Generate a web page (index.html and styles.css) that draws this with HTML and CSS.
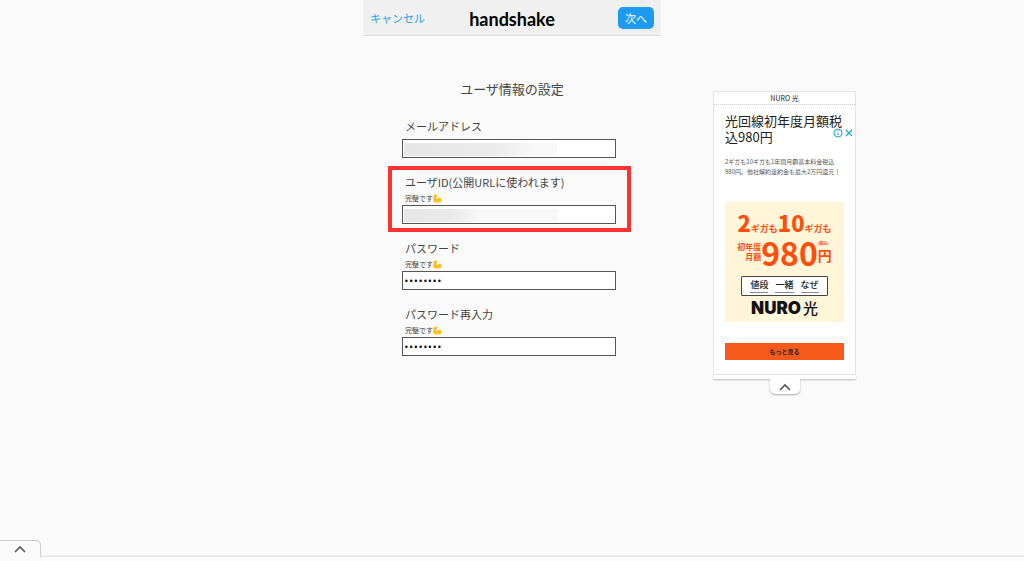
FILE: index.html
```html
<!DOCTYPE html>
<html lang="ja">
<head>
    <meta charset="UTF-8">
    <meta name="viewport" content="width=device-width, initial-scale=1.0">
    <title>handshake</title>
    <link rel="stylesheet" href="styles.css">
</head>
<body>
    <svg class="symbols" aria-hidden="true">
        <symbol id="muscle" viewBox="0 0 32 32">
            <path fill="#ffc41f" d="M5 3c4-2 10-2 11 1 1 3-1 5-4 5l-1 8c2 1 4 2 5 2 2-5 8-7 12-4 4 3 4 10 0 13-6 4-18 3-25 0C0 25 0 20 1 15 2 9 3 5 5 3z"/>
            <path fill="none" stroke="#e08a12" stroke-width="2" d="M8 8l5 1M11 16c-1 3 0 5 2 6M16 19c2-2 4-2 6-1"/>
        </symbol>
        <symbol id="chevron" viewBox="0 0 12 8">
            <path fill="none" stroke="#555" stroke-width="1.6" d="M1 7l5-5 5 5"/>
        </symbol>
    </svg>

    <div class="layout">
        <main class="signup">
            <header class="navbar">
                <a class="cancel" href="#">キャンセル</a>
                <h1 class="logo">handshake</h1>
                <button class="next" type="submit" form="user-form">次へ</button>
            </header>
            <form class="user-form" id="user-form">
                <h2 class="title">ユーザ情報の設定</h2>
                <div class="field field-plain">
                    <label for="email">メールアドレス</label>
                    <input class="masked" type="email" id="email">
                </div>
                <div class="field field-active">
                    <label for="user-id">ユーザID(公開URLに使われます)</label>
                    <p class="hint">完璧です<svg class="emoji"><use href="#muscle"/></svg></p>
                    <input class="masked masked-short" type="text" id="user-id">
                </div>
                <div class="field">
                    <label for="password">パスワード</label>
                    <p class="hint">完璧です<svg class="emoji"><use href="#muscle"/></svg></p>
                    <input type="password" id="password" value="password">
                </div>
                <div class="field">
                    <label for="password2">パスワード再入力</label>
                    <p class="hint">完璧です<svg class="emoji"><use href="#muscle"/></svg></p>
                    <input type="password" id="password2" value="password">
                </div>
            </form>
        </main>

        <aside class="side">
            <div class="ad">
                <p class="ad-brand">NURO 光</p>
                <div class="ad-marks">
                    <svg class="ad-mark" viewBox="0 0 10 10"><circle cx="5" cy="5" r="4" fill="none" stroke="#1aa7c9"/><path stroke="#1aa7c9" d="M5 4.4v3M5 2.3v1"/></svg>
                    <svg class="ad-mark" viewBox="0 0 10 10"><path stroke="#1aa7c9" stroke-width="1.2" d="M2 2l6 6M8 2l-6 6"/></svg>
                </div>
                <div class="ad-body">
                    <h3 class="ad-title">光回線初年度月額税込980円</h3>
                    <p class="ad-text">2ギガも10ギガも1年間月額基本料金税込<br>980円。他社解約違約金も最大2万円還元！</p>
                    <div class="banner">
                        <p class="banner-speed"><b>2</b>ギガも<b>10</b>ギガも</p>
                        <div class="banner-price">
                            <p class="banner-term">初年度<br>月額</p>
                            <p class="banner-amount">980</p>
                            <p class="banner-yen"><small>(税込)</small>円</p>
                        </div>
                        <p class="banner-words"><span>値段</span><span>一緒</span><span>なぜ</span></p>
                        <p class="banner-logo"><b>NURO</b>光</p>
                    </div>
                    <a class="ad-more" href="#">もっと見る</a>
                </div>
            </div>
            <div class="ad-edge"></div>
            <button class="ad-toggle" type="button" aria-label="閉じる"><svg class="chevron"><use href="#chevron"/></svg></button>
        </aside>
    </div>

    <div class="drawer">
        <button class="drawer-tab" type="button" aria-label="開く"><svg class="chevron"><use href="#chevron"/></svg></button>
        <div class="drawer-line"></div>
    </div>
</body>
</html>
```

FILE: styles.css
```css
* {
    margin: 0;
    padding: 0;
    box-sizing: border-box;
}

body {
    min-height: 100vh;
    background: #fafafa;
    color: #444;
    font-family: "Noto Sans CJK JP", sans-serif;
    font-size: 11px;
}

button {
    font-family: inherit;
    cursor: pointer;
}

a {
    text-decoration: none;
}

.symbols {
    display: none;
}

.layout {
    display: grid;
    grid-template-columns: 1fr minmax(0, 298px) 1fr;
}

.signup {
    grid-column: 2;
}

/* header */

.navbar {
    display: grid;
    grid-template-columns: 1fr auto 1fr;
    align-items: center;
    height: 36px;
    padding: 0 7px;
    background: #f0f0f0;
    border-bottom: 1px solid #ddd;
}

.cancel {
    color: #2b9fea;
    font-size: 11px;
}

.logo {
    padding-top: 2px;
    color: #000;
    font-family: Lato, sans-serif;
    font-size: 18px;
    font-weight: bold;
    line-height: 24px;
}

.next {
    justify-self: end;
    width: 36px;
    height: 22px;
    border: none;
    border-radius: 5px;
    background: #1d9bf0;
    color: #fff;
    font-size: 11px;
    line-height: 22px;
}

/* form */

.user-form {
    padding: 41px 30px 0 25px;
}

.title {
    padding: 0 0 9px 5px;
    font-size: 13px;
    font-weight: normal;
    line-height: 24px;
    text-align: center;
}

.field {
    display: flex;
    flex-direction: column;
    padding: 4px 11px 4px 10px;
    border: 4px solid transparent;
}

.field-plain {
    gap: 4px;
}

.field-active {
    border-color: #ff3131;
}

.field label {
    padding-left: 3px;
    font-size: 11px;
    line-height: 17px;
}

.hint {
    display: flex;
    align-items: center;
    padding-left: 3px;
    font-size: 7px;
    line-height: 14px;
}

.emoji {
    width: 9px;
    height: 9px;
}

.field input {
    width: 100%;
    height: 19px;
    padding: 2px 1px 0;
    border: 1px solid #555;
    background: #fff;
    color: #000;
    font-family: "DejaVu Sans", sans-serif;
    font-size: 8px;
}

.field .masked {
    background: linear-gradient(to right, #e6e6e6, #ebebeb 60%, #f8f8f8 85%) 1px 3px / 153px 13px no-repeat #fff;
}

.field .masked-short {
    background-image: linear-gradient(to right, #e6e6e6, #e9e9e9 30%, #f8f8f8 50%);
}

/* ad */

.side {
    display: flex;
    flex-direction: column;
    align-items: center;
    width: 143px;
    margin: 91px 0 0 52px;
}

.ad {
    position: relative;
    width: 100%;
    border: 1px solid #e4e4e4;
    background: #fff;
    color: #222;
}

.ad-brand {
    border-bottom: 1px dotted #ccc;
    font-size: 7px;
    line-height: 12px;
    text-align: center;
}

.ad-marks {
    position: absolute;
    top: 36px;
    right: 1px;
    display: flex;
    gap: 1px;
}

.ad-mark {
    width: 10px;
    height: 10px;
}

.ad-body {
    padding: 8px 11px 14px;
}

.ad-title {
    font-size: 13px;
    font-weight: normal;
    line-height: 16px;
}

.ad-text {
    padding: 12px 0 25px;
    color: #555;
    font-size: 6px;
    line-height: 10px;
    white-space: nowrap;
}

.banner {
    display: flex;
    flex-direction: column;
    align-items: center;
    height: 120px;
    padding-top: 8px;
    background: #fff5d8;
    color: #ff4e0a;
    font-weight: bold;
}

.banner-speed {
    display: flex;
    align-items: baseline;
    font-size: 9px;
    line-height: 10px;
}

.banner-speed b {
    font-size: 22px;
    line-height: 24px;
}

.banner-price {
    display: flex;
    align-items: center;
    height: 34px;
    margin-top: 1px;
}

.banner-term {
    font-size: 8px;
    line-height: 10px;
    text-align: right;
}

.banner-amount {
    font-size: 32px;
    line-height: 32px;
}

.banner-yen {
    font-size: 14px;
    line-height: 18px;
}

.banner-yen small {
    display: block;
    font-size: 4px;
    line-height: 6px;
}

.banner-words {
    display: flex;
    gap: 7px;
    margin-top: 7px;
    padding: 1px 8px 2px;
    border: 1px solid #444;
    border-radius: 1px;
    background: #fff;
    color: #222;
    font-size: 9px;
    font-weight: 500;
    line-height: 14px;
}

.banner-words span {
    border-bottom: 1px solid #888;
}

.banner-logo {
    display: flex;
    align-items: center;
    gap: 2px;
    color: #111;
    font-size: 15px;
    font-weight: 500;
    line-height: 24px;
}

.banner-logo b {
    font-family: Inter, sans-serif;
    font-size: 17px;
    font-weight: 900;
}

.ad-more {
    display: block;
    margin-top: 21px;
    background: #f65a1a;
    color: #222;
    font-size: 6px;
    font-weight: bold;
    line-height: 17px;
    text-align: center;
}

.ad-edge {
    width: 100%;
    height: 4px;
    background: #fff;
    box-shadow: 0 1px 2px #bbb;
}

.ad-toggle {
    width: 30px;
    height: 15px;
    border: none;
    border-radius: 0 0 5px 5px;
    background: #fff;
    box-shadow: 0 1px 2px #aaa;
    line-height: 0;
}

.chevron {
    width: 12px;
    height: 8px;
}

/* bottom drawer */

.drawer {
    position: fixed;
    right: 0;
    bottom: 0;
    left: 0;
}

.drawer-tab {
    display: block;
    width: 41px;
    height: 17px;
    border: 1px solid #ccc;
    border-width: 1px 1px 0 0;
    border-radius: 0 5px 0 0;
    background: #fafafa;
    line-height: 0;
}

.drawer-line {
    height: 4px;
    margin-left: 41px;
    background: #fcfcfc;
    box-shadow: 0 -1px 2px #ddd;
}
```
